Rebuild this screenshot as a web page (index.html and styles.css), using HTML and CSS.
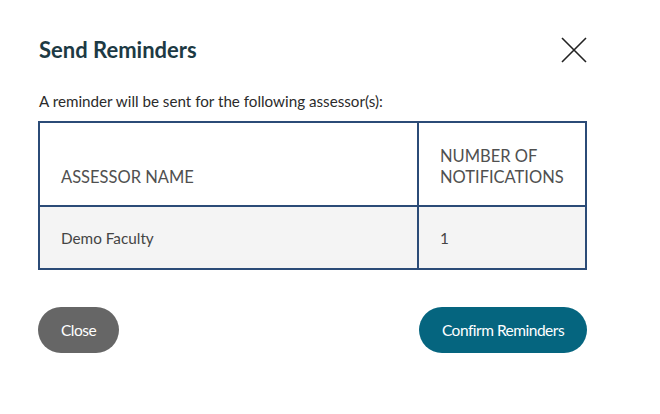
FILE: index.html
```html
<!DOCTYPE html>
<html lang="en">
<head>
<meta charset="utf-8">
<title>Send Reminders</title>
<link rel="stylesheet" href="styles.css">
</head>
<body>
<div class="modal">
  <div class="modal-header">
    <h2 class="modal-title">Send Reminders</h2>
    <button class="close-x" aria-label="Close">
      <svg width="26" height="26" viewBox="0 0 26 26"><path d="M1 1 L25 25 M25 1 L1 25" stroke="#222" stroke-width="1.6" fill="none"/></svg>
    </button>
  </div>
  <p class="intro">A reminder will be sent for the following assessor(s):</p>
  <table class="assessors">
    <thead>
      <tr>
        <th class="col-name">ASSESSOR NAME</th>
        <th class="col-count">NUMBER OF<br>NOTIFICATIONS</th>
      </tr>
    </thead>
    <tbody>
      <tr>
        <td>Demo Faculty</td>
        <td>1</td>
      </tr>
    </tbody>
  </table>
  <div class="actions">
    <button class="btn btn-close">Close</button>
    <button class="btn btn-confirm">Confirm Reminders</button>
  </div>
</div>
</body>
</html>
```
FILE: styles.css
```css
html, body {
  margin: 0;
  padding: 0;
  background: #ffffff;
}
body {
  font-family: Lato, "Open Sans", sans-serif;
  color: #333;
}
.modal {
  width: 549px;
  padding: 37px 0 0 38px;
}
.modal-header {
  display: flex;
  justify-content: space-between;
  align-items: flex-start;
}
.modal-title {
  margin: 0 0 0 1px;
  font-size: 22px;
  line-height: 26px;
  font-weight: 700;
  color: #1d3a44;
}
.close-x {
  border: 0;
  background: none;
  padding: 0;
  margin: 0;
  width: 26px;
  height: 26px;
  display: block;
}
.close-x svg { display: block; }
.intro {
  margin: 29px 0 11px 1px;
  font-size: 15.2px;
  line-height: 18px;
  color: #2b2b2b;
}
.assessors {
  width: 549px;
  border-collapse: collapse;
  border: 2px solid #2b4b77;
}
.assessors th,
.assessors td {
  border: 2px solid #2b4b77;
  text-align: left;
  padding: 0 20px 0 21px;
}
.assessors th {
  height: 65px;
  vertical-align: bottom;
  padding-bottom: 17px;
  font-size: 16.5px;
  line-height: 21px;
  font-weight: 400;
  color: #505050;
  background: #fff;
}
.assessors .col-name { width: 336px; }
.assessors td {
  height: 61px;
  vertical-align: middle;
  font-size: 15.3px;
  color: #444;
  background: #f4f4f4;
}
.actions {
  display: flex;
  justify-content: space-between;
  margin-top: 37px;
}
.btn {
  height: 46px;
  border: 0;
  border-radius: 23px;
  font-family: Lato, "Open Sans", sans-serif;
  font-size: 15.5px;
  letter-spacing: -0.5px;
  color: #fff;
  padding: 0;
}
.btn-close {
  width: 81px;
  background: #666666;
}
.btn-confirm {
  width: 168px;
  background: #05657f;
}
```
